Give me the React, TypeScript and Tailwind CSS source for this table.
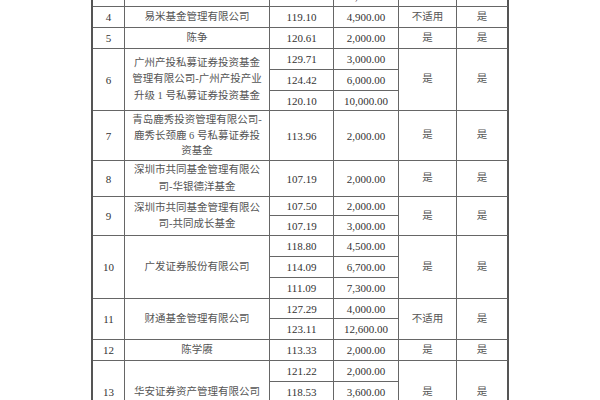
import React from "react";

type C = { t?: React.ReactNode; span?: number; kind?: "num" | "cn"; last?: boolean };

const cell = (c: C, i: number) => {
  const span =
    c.span === 3 ? "row-span-3" : c.span === 2 ? "row-span-2" : "";
  const font =
    c.kind === "cn"
      ? "text-[10.5px] leading-[16.5px] text-[#555] [font-family:'Liberation_Serif','Noto_Sans_CJK_SC',serif]"
      : "text-[11px] leading-[14px] text-[#333] [font-family:'Liberation_Serif','Noto_Sans_CJK_SC',serif]";
  const border = c.last
    ? "border-r-2 border-r-[#555] border-b border-b-[#666]"
    : "border-r border-b border-[#666]";
  return (
    <div
      key={i}
      className={`${span} ${font} ${border} flex items-center justify-center text-center whitespace-nowrap`}
    >
      {c.t}
    </div>
  );
};

const n = (t: string): C => ({ t, kind: "num" });
const z = (t: React.ReactNode, span?: number): C => ({ t, kind: "cn", span });
const yes = (span?: number): C => ({ t: "是", kind: "cn", span });
const yesLast = (span?: number): C => ({ t: "是", kind: "cn", span, last: true });

const cells: C[] = [
  // partial top row
  n(""), z(""), n("121.99"), n("14,000.00"), z(""), { t: "", last: true },
  // 4
  n("4"), z("易米基金管理有限公司"), n("119.10"), n("4,900.00"), z("不适用"), yesLast(),
  // 5
  n("5"), z("陈争"), n("120.61"), n("2,000.00"), yes(), yesLast(),
  // 6
  { t: "6", kind: "num", span: 3 },
  z(
    <span>
      广州产投私募证券投资基金
      <br />
      管理有限公司-广州产投产业
      <br />
      升级 1 号私募证券投资基金
    </span>,
    3
  ),
  n("129.71"), n("3,000.00"), yes(3), yesLast(3),
  n("124.42"), n("6,000.00"),
  n("120.10"), n("10,000.00"),
  // 7
  n("7"),
  z(
    <span className="leading-[15.5px]">
      青岛鹿秀投资管理有限公司-
      <br />
      鹿秀长颈鹿 6 号私募证券投
      <br />
      资基金
    </span>
  ),
  n("113.96"), n("2,000.00"), yes(), yesLast(),
  // 8
  n("8"),
  z(
    <span>
      深圳市共同基金管理有限公
      <br />
      司-华银德洋基金
    </span>
  ),
  n("107.19"), n("2,000.00"), yes(), yesLast(),
  // 9
  { t: "9", kind: "num", span: 2 },
  z(
    <span>
      深圳市共同基金管理有限公
      <br />
      司-共同成长基金
    </span>,
    2
  ),
  n("107.50"), n("2,000.00"), yes(2), yesLast(2),
  n("107.19"), n("3,000.00"),
  // 10
  { t: "10", kind: "num", span: 3 },
  z("广发证券股份有限公司", 3),
  n("118.80"), n("4,500.00"), yes(3), yesLast(3),
  n("114.09"), n("6,700.00"),
  n("111.09"), n("7,300.00"),
  // 11
  { t: "11", kind: "num", span: 2 },
  z("财通基金管理有限公司", 2),
  n("127.29"), n("4,000.00"), z("不适用", 2), yesLast(2),
  n("123.11"), n("12,600.00"),
  // 12
  n("12"), z("陈学赓"), n("113.33"), n("2,000.00"), yes(), yesLast(),
  // 13
  { t: "13", kind: "num", span: 3 },
  z("华安证券资产管理有限公司", 3),
  n("121.22"), n("2,000.00"), yes(3), yesLast(3),
  n("118.53"), n("3,600.00"),
  n("120.00"), n("2,000.00"),
];

export default function App() {
  return (
    <div className="w-[600px] h-[400px] overflow-hidden bg-white">
      <div className="ml-[91px] mt-[-14px] w-[416px] grid grid-cols-[32px_145px_64px_65px_58px_52px] grid-rows-[21px_21px_21px_21px_21px_20px_50px_36px_19px_20px_21px_21px_21px_20px_21px_21px_21px_21px_21px] border-l-2 border-l-[#555]">
        {cells.map(cell)}
      </div>
    </div>
  );
}
